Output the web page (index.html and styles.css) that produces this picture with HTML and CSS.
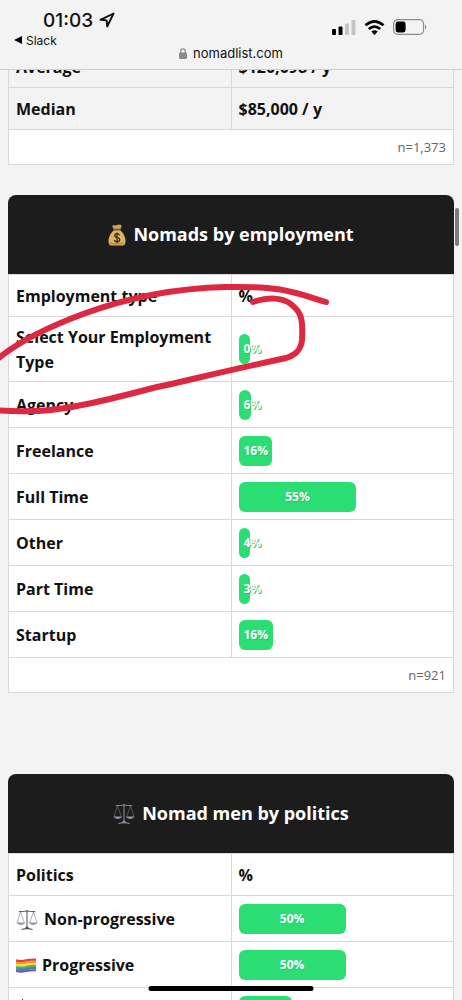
FILE: index.html
```html
<!DOCTYPE html>
<html lang="en">
<head>
<meta charset="utf-8">
<meta name="viewport" content="width=device-width, initial-scale=1">
<title>nomadlist.com</title>
<link rel="stylesheet" href="styles.css">
</head>
<body>
<svg class="defs" aria-hidden="true">
  <symbol id="scales" viewBox="0 0 24 24">
    <g fill="none" stroke="currentColor" stroke-linecap="round" stroke-linejoin="round">
      <path d="M3.500 2.800q4.500 .2 8.500-.6 4 .8 8.500 .6" stroke-width="1"/>
      <path d="M12 1.500v18" stroke-width="1.100"/>
      <path d="M4.800 3L1.200 15M4.800 3L9.200 15M19.200 3L14.800 15M19.200 3L22.800 15" stroke-width=".5"/>
    </g>
    <path d="M.6 14.800h9.400q-1 2.600-4.700 2.600T.6 14.800zM14 14.800h9.400q-1 2.600-4.700 2.600T14 14.800z" fill="#8b96a3"/>
    <path d="M10.800 19.300h2.400l.8 1.700q4 .2 4.500 1.900-6.500-1.400-13 0 .5-1.700 4.500-1.900z" fill="currentColor"/>
  </symbol>
</svg>
<div class="screen">
  <header class="topbar">
    <div class="status">
      <div class="clock">
        <span>01:03</span>
        <svg class="arrow" viewBox="0 0 16 16" aria-hidden="true"><path d="M1.500 7.800L14.500 1.500 8.200 14.500 7.600 8.400z" fill="none" stroke="#111" stroke-width="1.900" stroke-linejoin="round"/></svg>
      </div>
      <div class="indicators">
        <svg class="signal" viewBox="0 0 24 15" aria-hidden="true"><rect x="0" y="9" width="4" height="6" rx="1"/><rect x="6.500" y="6.500" width="4" height="8.500" rx="1"/><rect x="13" y="3.500" width="4" height="11.500" rx="1" fill="#c4c4c4"/><rect x="19.500" y="0" width="4" height="15" rx="1" fill="#c4c4c4"/></svg>
        <svg class="wifi" viewBox="0 0 20 15" aria-hidden="true"><g fill="none" stroke="#000" stroke-width="2.700"><path d="M1 5.300q9-7.800 18 0"/><path d="M4.300 9q5.700-4.800 11.400 0"/></g><path d="M6.800 11.600q3.200-2.600 6.400 0L10 14.900z"/></svg>
        <svg class="battery" viewBox="0 0 34 16" aria-hidden="true"><rect x=".6" y=".6" width="30" height="14.800" rx="4.200" fill="none" stroke="#8d8d8d" stroke-width="1.200"/><rect x="2.600" y="2.600" width="10" height="10.800" rx="2.400"/><path d="M32 5.500q2.600 2.500 0 5z" fill="#8d8d8d"/></svg>
      </div>
    </div>
    <a class="back" href="#"><svg viewBox="0 0 8 8" aria-hidden="true"><path d="M0 4l8-4v8z"/></svg>Slack</a>
    <div class="address">
      <svg viewBox="0 0 8 11" aria-hidden="true"><rect y="4.500" width="8" height="6.500" rx="1.200" fill="#8a8a8a"/><path d="M1.800 5V3a2.200 2.200 0 0 1 4.400 0v2" fill="none" stroke="#8a8a8a" stroke-width="1.200"/></svg>
      <span>nomadlist.com</span>
    </div>
  </header>

  <main class="page">
    <table class="stats shaded">
      <tbody>
        <tr><th scope="row">Average</th><td>$120,098 / y</td></tr>
        <tr><th scope="row">Median</th><td>$85,000 / y</td></tr>
      </tbody>
      <tfoot><tr><td colspan="2">n=1,373</td></tr></tfoot>
    </table>

    <table class="stats employment">
      <caption><span class="title"><svg class="bag" viewBox="0 0 18 22" aria-hidden="true"><path d="M5 1q2 .8 4 0t4 0q1.500 1-.8 4H5.800Q3.500 2 5 1z" fill="#c9a252"/><path d="M6 6h6q5.500 5 5.500 11 0 4.500-3 4.500h-11q-3 0-3-4.500 0-6 5.500-11z" fill="#d9b565"/><path d="M2 19q7 2 14 0" stroke="#b48a3c" stroke-width="1.500" fill="none"/><rect x="5" y="4.800" width="8" height="1.600" rx=".8" fill="#7d5526"/><path d="M11.600 11.200q-.6-1.500-2.600-1.500-2.300 0-2.300 1.900 0 1.600 2.400 2 2.600.4 2.600 2.100 0 2-2.600 2-2.300 0-2.800-1.700M9 8.400v10.600" fill="none" stroke="#3f2c10" stroke-width="1.300"/></svg>Nomads by employment</span></caption>
      <thead><tr><th scope="col">Employment type</th><th scope="col">%</th></tr></thead>
      <tbody class="bars">
        <tr><th scope="row">Select Your Employment Type</th><td><div class="bar" style="width:0%">0%</div></td></tr>
        <tr><th scope="row">Agency</th><td><div class="bar" style="width:6%">6%</div></td></tr>
        <tr><th scope="row">Freelance</th><td><div class="bar" style="width:15.500%">16%</div></td></tr>
        <tr><th scope="row">Full Time</th><td><div class="bar" style="width:55%">55%</div></td></tr>
        <tr><th scope="row">Other</th><td><div class="bar" style="width:4%">4%</div></td></tr>
        <tr><th scope="row">Part Time</th><td><div class="bar" style="width:3%">3%</div></td></tr>
        <tr><th scope="row">Startup</th><td><div class="bar" style="width:16%">16%</div></td></tr>
      </tbody>
      <tfoot><tr><td colspan="2">n=921</td></tr></tfoot>
    </table>

    <table class="stats politics">
      <caption><span class="title"><svg class="scale pale" aria-hidden="true"><use href="#scales"/></svg>Nomad men by politics</span></caption>
      <thead><tr><th scope="col">Politics</th><th scope="col">%</th></tr></thead>
      <tbody class="bars">
        <tr><th scope="row"><span class="label"><svg class="scale" aria-hidden="true"><use href="#scales"/></svg>Non-progressive</span></th><td><div class="bar" style="width:50%">50%</div></td></tr>
        <tr><th scope="row"><span class="label"><svg class="flag" viewBox="0 0 20 15" aria-hidden="true"><g fill="none" stroke-width="2.600"><path d="M0 2.600q5 1.200 10 0t10-.8" stroke="#e8413c"/><path d="M0 4.800q5 1.200 10 0t10-.8" stroke="#f59a2d"/><path d="M0 7q5 1.200 10 0t10-.8" stroke="#f7e03c"/><path d="M0 9.200q5 1.200 10 0t10-.8" stroke="#4fb54a"/><path d="M0 11.200q5 1.200 10 0t10-.8" stroke="#3f7fd0"/><path d="M0 13.200q5 1.200 10 0t10-.8" stroke="#7a4fa8" stroke-width="1.800"/></g></svg>Progressive</span></th><td><div class="bar" style="width:50%">50%</div></td></tr>
        <tr><th scope="row"><span class="label"><svg class="tip" viewBox="0 0 12 26" aria-hidden="true"><path d="M6.500 0v26" stroke="#444" stroke-width="1"/></svg></span></th><td><div class="bar" style="width:25%"></div></td></tr>
      </tbody>
    </table>
  </main>

  <svg class="marker" viewBox="0 0 340 140" aria-hidden="true">
    <path d="M-6 82C12 66 40 50 83 34C135 15 185 8 225 7C280 6 290 11 326 22"/>
    <path d="M253 22C268 17 283 17 292 25C302 33 303 41 302 60C301 70 296 75 286 78C225 91 190 100 153 108C115 118 65 131 33 131Q15 132-6 130"/>
  </svg>
  <div class="scrollbar"></div>
  <div class="home"></div>
</div>
</body>
</html>
```
FILE: styles.css
```css
* { box-sizing: border-box; }

body {
  margin: 0;
  background: #f3f3f3;
  color: #111;
  font-family: "Open Sans", "Noto Sans", sans-serif;
}

.defs { position: absolute; width: 0; height: 0; }

.screen {
  position: relative;
  height: 100vh;
  overflow: hidden;
}

/* Browser and status bar */
.topbar {
  position: absolute;
  inset: 0 0 auto;
  z-index: 2;
  height: 70px;
  padding-top: 8px;
  background: #f3f3f3;
  border-bottom: 1px solid #cfcfcf;
  font-family: Inter, "Liberation Sans", sans-serif;
}

.status {
  display: flex;
  align-items: center;
  justify-content: space-between;
  height: 24px;
  padding: 0 35px 0 43px;
}

.clock {
  display: flex;
  align-items: center;
  gap: 6px;
  font-size: 19px;
  font-weight: 500;
}

.arrow { width: 16px; height: 16px; }

.indicators {
  display: flex;
  align-items: center;
  gap: 8px;
  padding-top: 14px;
}

.signal { width: 24px; height: 15px; }
.wifi { width: 21px; height: 15px; }
.battery { width: 34px; height: 16px; }

.back {
  display: flex;
  align-items: center;
  gap: 4px;
  width: max-content;
  height: 16px;
  margin-left: 14px;
  color: #111;
  font-size: 12px;
  text-decoration: none;
}

.back svg { width: 8px; height: 8px; }

.address {
  display: flex;
  align-items: center;
  justify-content: center;
  gap: 6px;
  height: 10px;
  font-size: 13px;
  line-height: 13px;
}

.address svg { width: 8px; height: 11px; }

/* Statistics tables */
.page { padding: 45px 8px 0; }

.stats {
  width: 100%;
  table-layout: fixed;
  border-collapse: collapse;
  background: #fff;
  font-size: 16px;
  font-weight: 700;
  line-height: 25px;
}

.stats + .stats { margin-top: 30px; }
.stats + .politics { margin-top: 81px; }

.stats th,
.stats td {
  height: 42px;
  padding: 8px 7px 6px;
  border: 1px solid #d9d9d9;
  text-align: left;
  vertical-align: middle;
}

.shaded tbody { background: #f3f3f3; }

.stats .bars th,
.stats .bars td { height: 46px; }

.stats .bars td { padding: 7px 0 7px 7px; }

.stats tfoot td {
  height: 35px;
  padding: 4px 7px;
  color: #666;
  font-size: 13px;
  font-weight: 400;
  text-align: right;
}

.stats caption {
  height: 79px;
  padding: 27px 8px;
  background: #1c1c1c;
  border-radius: 8px 8px 0 0;
  color: #fff;
  font-size: 18px;
}

.title,
.label {
  display: flex;
  align-items: center;
  gap: 7px;
}

.title { justify-content: center; }

.bag { width: 18px; height: 22px; }
.scale { width: 22px; height: 22px; color: #4b5058; }
.pale { color: #8d949c; }
.flag { width: 20px; height: 15px; }
.tip { width: 12px; height: 26px; }

.label { gap: 6px; }

.bar {
  min-width: 11px;
  height: 30px;
  padding: 0 5px;
  background: #2bde73;
  border-radius: 6px;
  color: #fff;
  font-size: 12px;
  line-height: 30px;
  text-align: center;
  text-shadow: 1px 1px 0 #2fc46b;
  white-space: nowrap;
}

/* Overlays */
.marker {
  position: absolute;
  top: 280px;
  left: 0;
  z-index: 1;
  width: 340px;
  height: 140px;
  fill: none;
  stroke: #dc2840;
  stroke-width: 6;
  stroke-linecap: round;
  pointer-events: none;
}

.scrollbar {
  position: absolute;
  top: 208px;
  right: 3px;
  width: 4px;
  height: 38px;
  border-radius: 2px;
  background: #7c7c7c;
}

.home {
  position: absolute;
  bottom: 9px;
  left: 50%;
  width: 165px;
  height: 5px;
  border-radius: 3px;
  background: #000;
  transform: translateX(-50%);
}
```
